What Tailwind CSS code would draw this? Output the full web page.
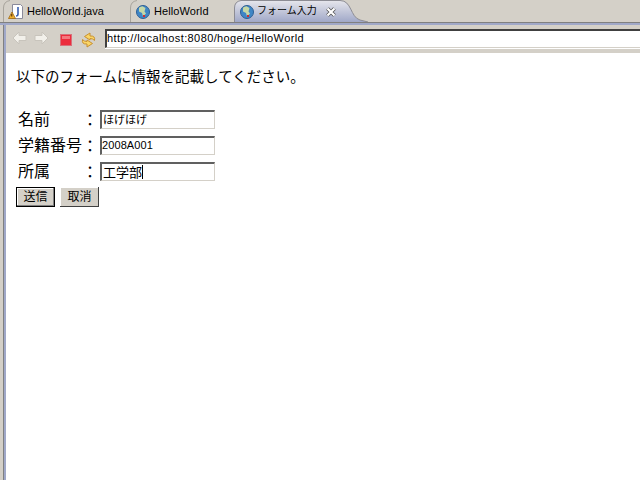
<!DOCTYPE html>
<html lang="ja">
<head>
  <meta charset="UTF-8">
  <title>フォーム入力</title>
  <script src="https://cdn.jsdelivr.net/npm/@tailwindcss/browser@4"></script>
</head>
<body class="w-[640px] h-[480px] overflow-hidden bg-white font-['Liberation_Sans','Noto_Sans_CJK_JP',sans-serif] text-black">
  <div class="flex flex-col h-full">
    <!-- Tabs -->
    <div class="flex h-[22px] bg-[#d4d0c8] shrink-0 text-[11px] leading-[22px]">
      <div class="relative w-[130px] pl-[8px] flex items-center shrink-0">
        <svg class="absolute left-0 top-0" width="12" height="22" fill="none"><path d="M3.5 22V8Q3.5 1.5 10 .5" stroke="#a8a49c"/></svg>
        <svg width="16" height="18" viewBox="0 0 16 18" class="shrink-0 mt-[2px]">
          <path d="M4.5 1.500h8l2 2v12h-10z" fill="#fff" stroke="#8a8a9a"/>
          <path d="M10 4v7q0 2-2 2" fill="none" stroke="#3a5fb0" stroke-width="1.600"/>
          <path d="M4 9l3.500 6.500h-7z" fill="#f0b030" stroke="#a06810" stroke-width=".8"/>
          <path d="M3.800 11v2.500" stroke="#402000"/>
        </svg>
        <span class="ml-[3px]">HelloWorld.java</span>
      </div>
      <div class="relative w-[104px] pl-[6px] flex items-center shrink-0">
        <svg class="absolute left-0 top-0" width="12" height="22" fill="none"><path d="M.5 22V8Q.5 1.500 7 .5" stroke="#a8a49c"/></svg>
        <svg width="14" height="14" viewBox="0 0 14 14" class="shrink-0 mt-[1px]">
          <circle cx="7" cy="7" r="6.500" fill="#3f86c6"/>
          <path d="M3 2.500l3-1.500 3.500 2-1 3.500 1.500 2-3 3-1-3.500-3-1.500z" fill="#c5d8a8"/>
          <path d="M7 10h2v2H7z" fill="#d03030"/>
          <circle cx="7" cy="7" r="6.500" fill="none" stroke="#2d5f95"/>
        </svg>
        <span class="ml-[4px] tracking-[0.1px]">HelloWorld</span>
      </div>
      <div class="relative w-[134px] pl-[6px] flex items-center shrink-0">
        <svg class="absolute left-0 top-0" width="134" height="22" fill="none">
          <defs><linearGradient id="active-tab" x1="0" y1="0" x2="0" y2="1"><stop offset="0" stop-color="#e6e6ec"/><stop offset="1" stop-color="#a0a8c8"/></linearGradient></defs>
          <path d="M.5 22V8Q.5 1.500 7 .5H106C118 .5 116 17 126 20L134 22Z" fill="url(#active-tab)"/>
          <path d="M.5 22V8Q.5 1.500 7 .5H106C118 .5 116 17 126 20L134 22" stroke="#8c8c94"/>
        </svg>
        <svg width="14" height="14" viewBox="0 0 14 14" class="relative shrink-0 mt-[1px]">
          <circle cx="7" cy="7" r="6.500" fill="#3f86c6"/>
          <path d="M3 2.500l3-1.500 3.500 2-1 3.500 1.500 2-3 3-1-3.500-3-1.500z" fill="#c5d8a8"/>
          <path d="M7 10h2v2H7z" fill="#d03030"/>
          <circle cx="7" cy="7" r="6.500" fill="none" stroke="#2d5f95"/>
        </svg>
        <span class="relative ml-[3px] w-[60px] text-[10px] whitespace-nowrap">フォーム入力</span>
        <svg width="10" height="10" viewBox="0 0 10 10" class="relative ml-[9px] mt-[1px]">
          <path d="M1.500 1.500l7 7m0-7l-7 7" stroke="#555" stroke-width="3.800"/>
          <path d="M1.500 1.500l7 7m0-7l-7 7" stroke="#fff" stroke-width="2.200"/>
        </svg>
      </div>
    </div>
    <div class="h-px bg-[#808080] shrink-0"></div>
    <div class="h-[2px] bg-[#a0a8c8] shrink-0"></div>
    <div class="flex flex-1 min-h-0">
      <!-- Left edge of the view -->
      <div class="w-[3px] bg-[#d4d0c8] shrink-0"></div>
      <div class="w-px bg-[#808080] shrink-0"></div>
      <div class="w-[2px] bg-[#a0a8c8] shrink-0"></div>
      <div class="flex flex-col flex-1 min-w-0">
        <!-- Browser toolbar -->
        <div class="h-[28px] bg-[#d4d0c8] flex items-start pt-[4px] shrink-0">
          <svg width="15" height="14" viewBox="0 0 15 14" class="ml-[6px] mt-[2px] shrink-0"><path d="M1 7l6-6v3.500h7v5H7V13z" fill="#f2f0ea" stroke="#c8c4bc"/></svg>
          <svg width="15" height="14" viewBox="0 0 15 14" class="ml-[7px] mt-[2px] shrink-0"><path d="M14 7L8 1v3.500H1v5h7V13z" fill="#f2f0ea" stroke="#c8c4bc"/></svg>
          <svg width="12" height="12" viewBox="0 0 12 12" class="ml-[11px] mt-[5px] shrink-0"><rect x=".5" y=".5" width="11" height="11" fill="#ec2c3c" stroke="#d8707a"/><rect x="2" y="2" width="8" height="3" fill="#f4787e"/></svg>
          <svg width="15" height="16" viewBox="0 0 15 16" class="ml-[9px] mt-[3px] shrink-0">
            <path d="M13.500 8.500Q14.500 3.500 9 4V1L3.500 4.500 9 8V6.500Q12 6.500 13.500 8.500z" fill="#fad666" stroke="#c89030"/>
            <path d="M1.500 7.500Q.5 12.500 6 12v3l5.500-3.500L6 8v1.500Q3 9.500 1.500 7.500z" fill="#fad666" stroke="#c89030"/>
          </svg>
          <div class="ml-[9px] flex-1 h-[20px] bg-white pb-px">
            <div class="h-full bg-white border-t-2 border-l-2 border-b border-t-[#404040] border-l-[#404040] border-b-[#d4d0c8] text-[11px] leading-[15px] tracking-[0.39px] whitespace-nowrap overflow-hidden">http://localhost:8080/hoge/HelloWorld</div>
          </div>
        </div>
        <!-- Page -->
        <div class="flex-1 pl-[10px]">
          <p class="mt-[14px] text-[14.5px] leading-[20px] whitespace-nowrap">以下のフォームに情報を記載してください。</p>
          <form class="mt-[23px] flex flex-col gap-[7px]">
            <div class="flex items-center h-[19px] text-[16px] whitespace-nowrap">
              <span class="ml-[2px] w-[64px]">名前</span>
              <span class="w-[16px] mr-[2px] mt-[3px]">：</span>
              <div class="w-[115px] h-[19px] border-2 border-r border-b border-[#606060] border-r-[#d4d0c8] border-b-[#d4d0c8] text-[11px] leading-[16px] pl-px">ほげほげ</div>
            </div>
            <div class="flex items-center h-[19px] text-[16px] whitespace-nowrap">
              <span class="ml-[2px] w-[64px]">学籍番号</span>
              <span class="w-[16px] mr-[2px] mt-[3px]">：</span>
              <div class="w-[115px] h-[19px] border-2 border-r border-b border-[#606060] border-r-[#d4d0c8] border-b-[#d4d0c8] text-[11px] leading-[15px] tracking-[0.1px]">2008A001</div>
            </div>
            <div class="flex items-center h-[19px] text-[16px] whitespace-nowrap">
              <span class="ml-[2px] w-[64px]">所属</span>
              <span class="w-[16px] mr-[2px] mt-[3px]">：</span>
              <div class="w-[115px] h-[19px] border-2 border-r border-b border-[#606060] border-r-[#d4d0c8] border-b-[#d4d0c8] text-[13px] leading-[15px] pl-px flex items-center"><span>工学部</span><span class="w-px h-[14px] bg-black"></span></div>
            </div>
            <div class="flex gap-[5px] -mt-px">
              <div class="w-[39px] h-[20px] bg-[#d4d0c8] border border-black shadow-[inset_-1px_-1px_0_#808080,inset_1px_1px_0_#fff] text-[12px] leading-[18px] text-center">送信</div>
              <div class="w-[39px] h-[20px] bg-[#d4d0c8] shadow-[inset_-1px_-1px_0_#404040,inset_1px_1px_0_#fff] text-[12px] leading-[20px] text-center">取消</div>
            </div>
          </form>
        </div>
      </div>
    </div>
  </div>
</body>
</html>
